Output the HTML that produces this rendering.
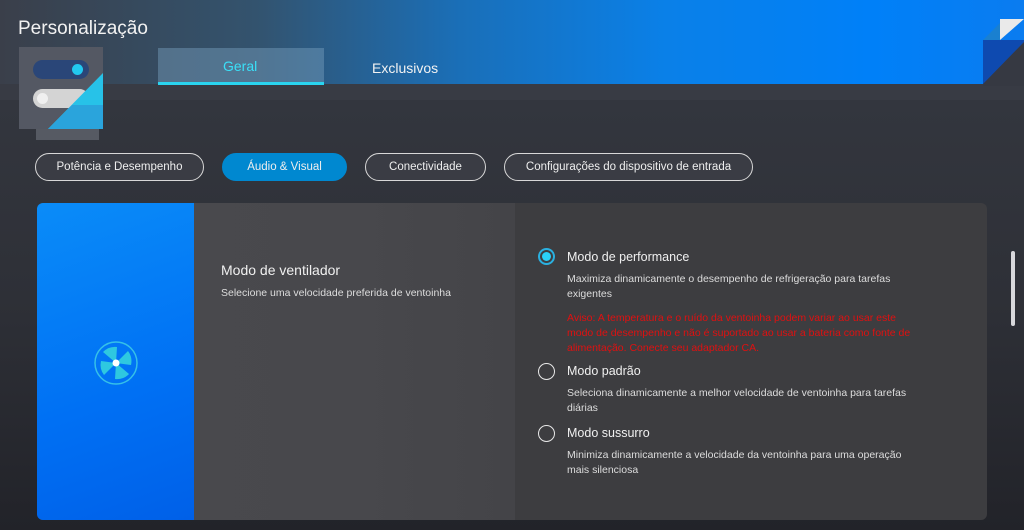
<!DOCTYPE html>
<html><head><meta charset="utf-8"><style>
*{margin:0;padding:0;box-sizing:border-box}
body{width:1024px;height:530px;overflow:hidden;position:relative;font-family:"Liberation Sans",sans-serif;background:linear-gradient(180deg,#363942 84px,#33363e 100px,#2e3037 300px,#222329 530px);color:#fff}
.hdr{position:absolute;left:0;top:0;width:1024px;height:84px;background:linear-gradient(90deg,#3a3f4a 0%,#33536e 25%,#1a6fb8 45%,#0a80e8 65%,#0080f8 85%,#0a7cf0 100%)}
.abs{position:absolute}
.pill{position:absolute;top:153px;height:28px;border:1.5px solid #d8d8d8;border-radius:14px;font-size:11.5px;display:flex;align-items:center;justify-content:center;background:#3a3c44;color:#eee}
.t{position:absolute;white-space:nowrap}
.radio{position:absolute;width:17px;height:17px;border-radius:50%;border:1.5px solid #e8e8e8}
</style></head><body>
<div class="hdr"></div>
<div class="abs" style="left:0;top:84px;width:1024px;height:16px;background:#383b44"></div>
<div class="t" style="left:18px;top:18px;font-size:19px;color:#f2f2f2">Personalização</div>
<div class="abs" style="left:36px;top:100px;width:63px;height:40px;background:#565a63"></div>
<div class="abs" style="left:19px;top:47px;width:84px;height:82px;background:#545863"></div>
<div class="abs" style="left:33px;top:60px;width:56px;height:19px;border-radius:10px;background:#2a4678"></div>
<div class="abs" style="left:72px;top:64px;width:11px;height:11px;border-radius:50%;background:#22c8f0"></div>
<div class="abs" style="left:33px;top:89px;width:56px;height:19px;border-radius:10px;background:#d4d4d4"></div>
<div class="abs" style="left:37px;top:93px;width:11px;height:11px;border-radius:50%;background:#f0f0f0"></div>
<svg class="abs" style="left:19px;top:47px" width="84" height="82"><polygon points="84,26 84,82 29,82" fill="#27c2e8"/><polygon points="84,58 84,82 29,82 53,58" fill="#2aa4dc"/></svg>
<div class="abs" style="left:158px;top:48px;width:166px;height:36px;background:rgba(120,160,190,.45)"></div>
<div class="abs" style="left:158px;top:82px;width:166px;height:3px;background:#2ad4f0"></div>
<div class="t" style="left:223px;top:58px;font-size:14px;color:#3ae0f8">Geral</div>
<div class="t" style="left:372px;top:60px;font-size:14px;color:#f2f2f2">Exclusivos</div>
<svg class="abs" style="left:983px;top:18px" width="41" height="68"><polygon points="0,22 41,22 41,68 0,68" fill="#363942"/><polygon points="0,22 41,22 41,24 0,66" fill="#0e4ab0"/><polygon points="0,22 17,5 17,22" fill="#1a80d0"/><polygon points="17,1 41,1 17,22" fill="#eaeaea"/></svg>
<div class="pill" style="left:35px;width:169px">Potência e Desempenho</div>
<div class="pill" style="left:222px;width:125px;background:#0088d0;border-color:#0088d0">Áudio &amp; Visual</div>
<div class="pill" style="left:365px;width:121px">Conectividade</div>
<div class="pill" style="left:504px;width:249px">Configurações do dispositivo de entrada</div>
<div class="abs" style="left:37px;top:203px;width:950px;height:317px;border-radius:6px;overflow:hidden;background:#3d3d40">
 <div class="abs" style="left:0;top:0;width:157px;height:317px;background:linear-gradient(160deg,#0a8cf8,#0070f4 60%,#0060e8)"></div>
 <div class="abs" style="left:157px;top:0;width:321px;height:317px;background:linear-gradient(90deg,#49494d,#48484c 50%,#444448)"></div>
</div>
<svg class="abs" style="left:93px;top:340px" width="46" height="46" viewBox="0 0 46 46"><circle cx="23" cy="23" r="21" fill="none" stroke="#35c0e8" stroke-width="1.5"/><g fill="#2ec8e0"><path d="M23 23 L10 12 A17 17 0 0 1 24 7 Z"/><path d="M23 23 L35 11 A17 17 0 0 1 38 25 Z"/><path d="M23 23 L36 34 A17 17 0 0 1 22 39 Z"/><path d="M23 23 L11 35 A17 17 0 0 1 8 21 Z"/></g><circle cx="23" cy="23" r="3.5" fill="#fff"/></svg>
<div class="t" style="left:221px;top:262px;font-size:14px;color:#f0f0f0">Modo de ventilador</div>
<div class="t" style="left:221px;top:287px;font-size:10.5px;color:#ddd">Selecione uma velocidade preferida de ventoinha</div>
<div class="radio" style="left:538px;top:248px;border-color:#2ab0e0;border-width:2px"></div>
<div class="abs" style="left:542px;top:252px;width:9px;height:9px;border-radius:50%;background:#2ad0f8"></div>
<div class="t" style="left:567px;top:250px;font-size:12.5px;color:#f0f0f0">Modo de performance</div>
<div class="t" style="left:567px;top:272px;font-size:10.5px;line-height:15px;color:#ddd">Maximiza dinamicamente o desempenho de refrigeração para tarefas<br>exigentes</div>
<div class="t" style="left:567px;top:311px;font-size:10.5px;line-height:15px;color:#e01010">Aviso: A temperatura e o ruído da ventoinha podem variar ao usar este<br>modo de desempenho e não é suportado ao usar a bateria como fonte de<br>alimentação. Conecte seu adaptador CA.</div>
<div class="radio" style="left:538px;top:363px"></div>
<div class="t" style="left:567px;top:364px;font-size:12.5px;color:#f0f0f0">Modo padrão</div>
<div class="t" style="left:567px;top:386px;font-size:10.5px;line-height:15px;color:#ddd">Seleciona dinamicamente a melhor velocidade de ventoinha para tarefas<br>diárias</div>
<div class="radio" style="left:538px;top:425px"></div>
<div class="t" style="left:567px;top:426px;font-size:12.5px;color:#f0f0f0">Modo sussurro</div>
<div class="t" style="left:567px;top:448px;font-size:10.5px;line-height:15px;color:#ddd">Minimiza dinamicamente a velocidade da ventoinha para uma operação<br>mais silenciosa</div>
<div class="abs" style="left:1011px;top:251px;width:4px;height:75px;border-radius:2px;background:#d8d8dc"></div>
</body></html>
